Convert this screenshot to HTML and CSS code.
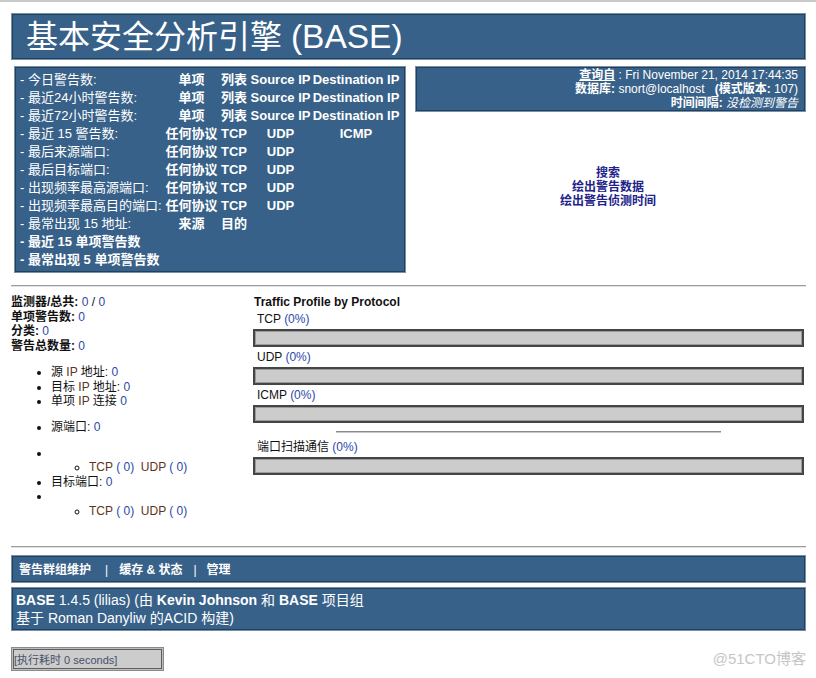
FILE: index.html
```html
<!DOCTYPE html>
<html lang="zh-CN">
<head>
<meta charset="utf-8">
<title>基本安全分析引擎 (BASE)</title>
<link rel="stylesheet" href="styles.css">
</head>
<body>
<div class="topstrip"></div>
<div class="page">
  <div class="box title-box"><h1>基本安全分析引擎 <span class="title-latin">(BASE)</span></h1></div>

  <div class="summary">
    <div class="box left-box">
      <div class="alert-grid">
        <span class="lbl">- 今日警告数:</span><a class="c">单项</a><a class="c">列表</a><a class="c">Source IP</a><a class="c">Destination IP</a>
        <span class="lbl">- 最近24小时警告数:</span><a class="c">单项</a><a class="c">列表</a><a class="c">Source IP</a><a class="c">Destination IP</a>
        <span class="lbl">- 最近72小时警告数:</span><a class="c">单项</a><a class="c">列表</a><a class="c">Source IP</a><a class="c">Destination IP</a>
        <span class="lbl">- 最近 15 警告数:</span><a class="c">任何协议</a><a class="c">TCP</a><a class="c">UDP</a><a class="c">ICMP</a>
        <span class="lbl">- 最后来源端口:</span><a class="c">任何协议</a><a class="c">TCP</a><a class="c">UDP</a><span></span>
        <span class="lbl">- 最后目标端口:</span><a class="c">任何协议</a><a class="c">TCP</a><a class="c">UDP</a><span></span>
        <span class="lbl">- 出现频率最高源端口:</span><a class="c">任何协议</a><a class="c">TCP</a><a class="c">UDP</a><span></span>
        <span class="lbl">- 出现频率最高目的端口:</span><a class="c">任何协议</a><a class="c">TCP</a><a class="c">UDP</a><span></span>
        <span class="lbl">- 最常出现 15 地址:</span><a class="c">来源</a><a class="c">目的</a><span></span><span></span>
        <a class="full">- 最近 15 单项警告数</a>
        <a class="full">- 最常出现 5 单项警告数</a>
      </div>
    </div>
    <div class="right-col">
      <div class="box info-box">
        <div><b><u>查询自</u></b> : Fri November 21, 2014 17:44:35</div>
        <div><b>数据库:</b> snort@localhost &nbsp; <b>(模式版本:</b> 107)</div>
        <div><b>时间间隔:</b> <i>没检测到警告</i></div>
      </div>
      <div class="links">
        <a>搜索</a>
        <a>绘出警告数据</a>
        <a>绘出警告侦测时间</a>
      </div>
    </div>
  </div>

  <hr class="rule rule-top">

  <div class="stats">
    <div class="stats-left">
      <div class="counts">
        <div><b>监测器/总共:</b> <span class="v">0</span> / <span class="v">0</span></div>
        <div><b>单项警告数:</b> <span class="v">0</span></div>
        <div><b>分类:</b> <span class="v">0</span></div>
        <div><b>警告总数量:</b> <span class="v">0</span></div>
      </div>
      <ul class="list addr-list">
        <li>源 <span class="proto">IP</span> 地址: <span class="v">0</span></li>
        <li>目标 <span class="proto">IP</span> 地址: <span class="v">0</span></li>
        <li>单项 <span class="proto">IP</span> 连接 <span class="v">0</span></li>
      </ul>
      <ul class="list port-list">
        <li>源端口: <span class="v">0</span></li>
        <li class="empty">&nbsp;
          <ul class="sub">
            <li><span class="proto">TCP</span> <span class="v">( 0)</span>&nbsp; <span class="proto">UDP</span> <span class="v">( 0)</span></li>
          </ul>
        </li>
        <li>目标端口: <span class="v">0</span></li>
        <li>&nbsp;
          <ul class="sub">
            <li><span class="proto">TCP</span> <span class="v">( 0)</span>&nbsp; <span class="proto">UDP</span> <span class="v">( 0)</span></li>
          </ul>
        </li>
      </ul>
    </div>
    <div class="stats-right">
      <div class="chart-title">Traffic Profile by Protocol</div>
      <div class="chart-label">TCP <span class="v">(0%)</span></div>
      <div class="bar"></div>
      <div class="chart-label">UDP <span class="v">(0%)</span></div>
      <div class="bar"></div>
      <div class="chart-label">ICMP <span class="v">(0%)</span></div>
      <div class="bar"></div>
      <hr class="chart-rule">
      <div class="chart-label">端口扫描通信 <span class="v">(0%)</span></div>
      <div class="bar"></div>
    </div>
  </div>

  <hr class="rule rule-bottom">

  <div class="box nav-box">
    <a>警告群组维护</a><span class="sep sep-first">|</span><a>缓存 &amp; 状态</a><span class="sep">|</span><a>管理</a>
  </div>
  <div class="box footer-box">
    <div><b>BASE</b> 1.4.5 (lilias) (由 <b>Kevin Johnson</b> 和 <b>BASE</b> 项目组</div>
    <div>基于 Roman Danyliw 的ACID 构建)</div>
  </div>

  <div class="exec-row">
    <div class="exec">[执行耗时 0 seconds]</div>
    <span class="watermark">@51CTO博客</span>
  </div>
</div>
</body>
</html>
```

FILE: styles.css
```css
* { box-sizing: border-box; }

html, body {
  margin: 0;
  padding: 0;
  background: #ffffff;
}

body {
  font-family: "Liberation Sans", "Noto Sans CJK SC", sans-serif;
  font-size: 12px;
  color: #111111;
}

a { color: inherit; text-decoration: none; }

.topstrip {
  height: 2px;
  background: #c9c9c9;
}

.page {
  padding: 0 10px 0 11px;
}

.box {
  background: #386189;
  color: #ffffff;
  border: 1px solid #7a90a6;
  box-shadow: inset 0 0 0 1px #20405f;
}

/* title */
.title-box {
  margin-top: 11px;
  height: 47px;
  display: flex;
  align-items: center;
  padding-left: 14px;
}
.title-box h1 {
  margin: 0;
  font-size: 32px;
  font-weight: normal;
  line-height: 40px;
  white-space: nowrap;
}
.title-latin {
  font-size: 33.5px;
}

/* summary */
.summary {
  margin-top: 6px;
  display: grid;
  grid-template-columns: 395px 391px;
  column-gap: 9px;
  align-items: start;
}

.left-box {
  margin-left: 3px;
  height: 207px;
  padding: 4px 0 3px 5px;
  font-size: 13px;
}

.alert-grid {
  display: grid;
  grid-template-columns: 144px 55px 30px 63px 88px;
  grid-auto-rows: 18px;
  line-height: 18px;
  white-space: nowrap;
}
.alert-grid .lbl { text-align: left; }
.alert-grid .c {
  text-align: center;
  font-weight: bold;
}
.alert-grid .full {
  grid-column: 1 / -1;
  font-weight: bold;
}

.right-col {
  display: flex;
  flex-direction: column;
}

.info-box {
  height: 46px;
  padding: 1px 7px 1px 6px;
  text-align: right;
  line-height: 14px;
  font-size: 12px;
  white-space: nowrap;
}

.links {
  margin-top: 54px;
  padding-right: 5px;
  display: flex;
  flex-direction: column;
  align-items: center;
  line-height: 14px;
  font-weight: bold;
  color: #22228a;
}

/* rules */
.rule {
  margin: 0;
  height: 0;
  border: 0;
  border-top: 1px solid #9c9c9c;
  border-bottom: 1px solid #e2e2e2;
}
.rule-top { margin-top: 12px; }
.rule-bottom { margin-top: 28px; }

/* stats */
.stats {
  margin-top: 8px;
  display: grid;
  grid-template-columns: 242px 1fr;
  align-items: start;
}

.v { color: #2b48a8; }
.proto { color: #5c3420; }

.counts {
  line-height: 14.5px;
}

.list {
  margin: 0;
  padding-left: 40px;
  line-height: 14.5px;
}
.addr-list { margin-top: 12px; }
.port-list { margin-top: 11px; }
.port-list .empty { margin-top: 11.5px; }

.sub {
  margin: 0;
  padding-left: 38px;
  list-style-type: circle;
  line-height: 14.5px;
}

.stats-right {
  padding-right: 2px;
}
.chart-title {
  font-weight: bold;
  line-height: 14px;
  padding-left: 1px;
}
.chart-label {
  margin-top: 2px;
  line-height: 16px;
  padding-left: 4px;
}
.bar {
  margin-top: 2px;
  height: 18px;
  background: #cccccc;
  border: 2px solid #454545;
  box-shadow: inset 0 0 0 1px #9a9a9a;
}
.chart-rule {
  width: 70%;
  margin: 8px auto 6px;
  height: 0;
  border: 0;
  border-top: 1px solid #8a8a8a;
  border-bottom: 1px solid #c8c8c8;
}

/* nav & footer */
.nav-box {
  margin-top: 7px;
  height: 28px;
  padding: 7px 7px 5px;
  line-height: 14px;
  font-weight: bold;
  white-space: nowrap;
}
.sep {
  font-weight: normal;
  margin: 0 10px 0 11px;
}
.sep-first {
  margin: 0 11px 0 14px;
}

.footer-box {
  margin-top: 4px;
  height: 44px;
  padding: 3px 4px 3px;
  font-size: 14px;
  line-height: 18px;
  white-space: nowrap;
}

.exec-row {
  margin-top: 16px;
  display: flex;
  justify-content: space-between;
  align-items: center;
}
.exec {
  width: 153px;
  height: 24px;
  padding-left: 2px;
  display: flex;
  align-items: center;
  background: #cccccc;
  border: 1px solid #8a8a8a;
  box-shadow: inset 0 0 0 1px #bdbdbd, inset 0 0 0 2px #5e5e5e;
  font-size: 11px;
  color: #47506a;
  white-space: nowrap;
}
.watermark {
  font-size: 15px;
  color: #c6c6c6;
  line-height: 18px;
}
```
